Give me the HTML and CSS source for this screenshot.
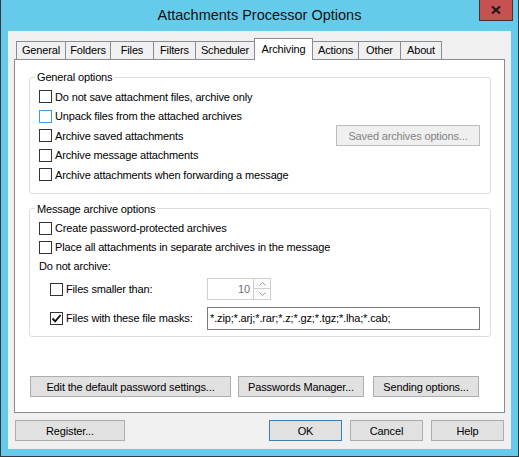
FILE: index.html
```html
<!DOCTYPE html>
<html lang="en">
<head>
  <meta charset="UTF-8" />
  <title>Attachments Processor Options</title>
  <link rel="stylesheet" href="styles.css">
</head>
<body>
  <div class="window">
    <!-- Title bar -->
    <div class="titlebar">
      <span class="title">Attachments Processor Options</span>
      <button class="close" aria-label="Close">
        <svg width="10" height="8" viewBox="0 0 10 8"><path d="M1 0.5 L9 7.5 M9 0.5 L1 7.5" stroke="#1a1a1a" stroke-width="2.2" fill="none"/></svg>
      </button>
    </div>

    <div class="client">
      <!-- Tabs -->
      <div class="tabs">
        <span class="tab tab-general">General</span>
        <span class="tab tab-folders">Folders</span>
        <span class="tab tab-files">Files</span>
        <span class="tab tab-filters">Filters</span>
        <span class="tab tab-scheduler">Scheduler</span>
        <span class="tab tab-archiving active">Archiving</span>
        <span class="tab tab-actions">Actions</span>
        <span class="tab tab-other">Other</span>
        <span class="tab tab-about">About</span>
      </div>

      <div class="panel">
        <fieldset class="group">
          <legend>General options</legend>
          <div class="row"><span class="box"></span>Do not save attachment files, archive only</div>
          <div class="row"><span class="box hot"></span>Unpack files from the attached archives</div>
          <div class="row"><span class="box"></span>Archive saved attachments<button class="btn btn-saved" disabled>Saved archives options...</button></div>
          <div class="row"><span class="box"></span>Archive message attachments</div>
          <div class="row"><span class="box"></span>Archive attachments when forwarding a message</div>
        </fieldset>

        <fieldset class="group group-message">
          <legend>Message archive options</legend>
          <div class="row"><span class="box"></span>Create password-protected archives</div>
          <div class="row"><span class="box"></span>Place all attachments in separate archives in the message</div>
          <div class="row">Do not archive:</div>
          <div class="row sub sub-spin">
            <span class="box"></span>
            <span class="sub-label">Files smaller than:</span>
            <span class="spin">
              <span class="spin-value">10</span>
              <span class="spin-arrows">
                <span class="arrow"><svg width="7" height="4" viewBox="0 0 7 4"><path d="M0.5 3.5 L3.5 0.5 L6.5 3.5" stroke="#9a9a9a" fill="none"/></svg></span>
                <span class="arrow"><svg width="7" height="4" viewBox="0 0 7 4"><path d="M0.5 0.5 L3.5 3.5 L6.5 0.5" stroke="#9a9a9a" fill="none"/></svg></span>
              </span>
            </span>
          </div>
          <div class="row sub sub-mask">
            <span class="box"><svg width="11" height="11" viewBox="0 0 11 11"><path d="M1.5 5.5 L4.2 8.4 L9.6 2" stroke="#111" stroke-width="1.9" fill="none"/></svg></span>
            <span class="sub-label">Files with these file masks:</span>
            <span class="textbox">*.zip;*.arj;*.rar;*.z;*.gz;*.tgz;*.lha;*.cab;</span>
          </div>
        </fieldset>

        <div class="panel-buttons">
          <button class="btn btn-edit">Edit the default password settings...</button>
          <button class="btn btn-manager">Passwords Manager...</button>
          <button class="btn btn-sending">Sending options...</button>
        </div>
      </div>

      <!-- Dialog buttons -->
      <div class="dialog-buttons">
        <button class="btn btn-register">Register...</button>
        <button class="btn btn-small btn-ok">OK</button>
        <button class="btn btn-small">Cancel</button>
        <button class="btn btn-small btn-help">Help</button>
      </div>
    </div>
  </div>
</body>
</html>
```

FILE: styles.css
```css
body {
  margin: 0;
  font-family: "Liberation Sans", Arial, sans-serif;
  font-size: 11px;
  letter-spacing: -0.15px;
  color: #000;
}

.window {
  width: 519px;
  height: 457px;
  box-sizing: border-box;
  background: #66cbea;
  border: 1px solid #2e3b42;
  border-top: none;
}

/* Title bar */
.titlebar {
  position: relative;
  height: 31px;
  line-height: 31px;
  text-align: center;
}

.title {
  font-size: 14.5px;
  letter-spacing: 0;
  color: #111;
}

.close {
  position: absolute;
  top: 0;
  right: 5px;
  width: 34px;
  height: 21px;
  padding: 0;
  box-sizing: border-box;
  background: #c75050;
  border: 1px solid #4b2f2f;
  border-top: none;
  display: flex;
  align-items: center;
  justify-content: center;
}

/* Client area */
.client {
  margin: 0 7px;
  height: 418px;
  box-sizing: border-box;
  background: #f0f0f0;
  padding: 7px 6px 0;
}

.tabs {
  display: flex;
  align-items: flex-end;
  height: 21px;
  padding-left: 2px;
  position: relative;
  z-index: 1;
}

.tab {
  box-sizing: border-box;
  height: 18px;
  line-height: 17px;
  border: 1px solid #898c95;
  border-bottom: none;
  margin-left: -1px;
  background: #f0f0f0;
  text-align: center;
  white-space: nowrap;
}

.tab:first-child { margin-left: 0; }

.tab.active {
  height: 22px;
  line-height: 20px;
  margin-bottom: -1px;
  background: #fff;
}

.tab-general { width: 50px; }
.tab-folders { width: 46px; }
.tab-files { width: 44px; }
.tab-filters { width: 43px; }
.tab-scheduler { width: 60px; }
.tab-archiving { width: 59px; }
.tab-actions { width: 47px; }
.tab-other { width: 43px; }
.tab-about { width: 42px; }

.panel {
  background: #fff;
  border: 1px solid #898c95;
  padding: 10px 13px 15px 14px;
}

/* Group boxes */
.group {
  margin: 0;
  min-width: 0;
  border: 1px solid #dcdcdc;
  border-radius: 3px;
  padding: 3px 10px 8px 9px;
}

.group legend {
  padding: 0 2px;
  margin-left: -4px;
  line-height: 14px;
}

.group-message {
  margin-top: 8px;
  padding-bottom: 7px;
}

.row {
  display: flex;
  align-items: center;
  column-gap: 3px;
  height: 19.5px;
  white-space: nowrap;
}

.group-message .row { height: 19px; }

.box {
  box-sizing: border-box;
  width: 13px;
  height: 13px;
  flex: none;
  border: 1px solid #333;
  background: #fff;
  display: flex;
  align-items: center;
  justify-content: center;
}

.box.hot { border-color: #3d9be0; }

.group-message .sub {
  height: 22px;
  padding-left: 11px;
}

.group-message .sub-spin { margin-top: 2.5px; }
.group-message .sub-mask { margin-top: 7px; }

.sub-label {
  width: 138px;
  flex: none;
}

.spin {
  display: flex;
  height: 22px;
}

.spin-value {
  box-sizing: border-box;
  width: 47px;
  height: 22px;
  line-height: 20px;
  border: 1px solid #cfcfcf;
  padding-right: 3px;
  text-align: right;
  color: #6d6d7d;
}

.spin-arrows {
  display: flex;
  flex-direction: column;
  width: 17px;
}

.arrow {
  box-sizing: border-box;
  height: 11px;
  border: 1px solid #cfcfcf;
  border-left: none;
  background: #fbfbfb;
  display: flex;
  align-items: center;
  justify-content: center;
}

.arrow + .arrow { border-top: none; }

.textbox {
  flex: 1;
  box-sizing: border-box;
  height: 23px;
  line-height: 21px;
  border: 1px solid #7a7a7a;
  padding-left: 2px;
}

/* Buttons */
.btn {
  box-sizing: border-box;
  height: 21px;
  padding: 0;
  background: #e1e1e1;
  border: 1px solid #adadad;
  font: inherit;
  letter-spacing: inherit;
  color: #000;
  white-space: nowrap;
}

.btn-saved {
  width: 144px;
  margin-left: auto;
  flex: none;
  background: #efefef;
  border-color: #bdbdbd;
  color: #838383;
}

.panel-buttons {
  display: flex;
  margin-top: 39px;
  padding-left: 1px;
}

.btn-edit { width: 201px; }
.btn-manager { width: 126px; margin-left: 7px; }
.btn-sending { width: 106px; margin-left: 9px; }

.dialog-buttons {
  display: flex;
  margin-top: 7px;
  padding: 0 1px;
  column-gap: 8px;
}

.btn-register { width: 110px; margin-right: auto; }
.btn-small { width: 73px; }
.btn-ok { border-color: #3c7fb1; }
```
